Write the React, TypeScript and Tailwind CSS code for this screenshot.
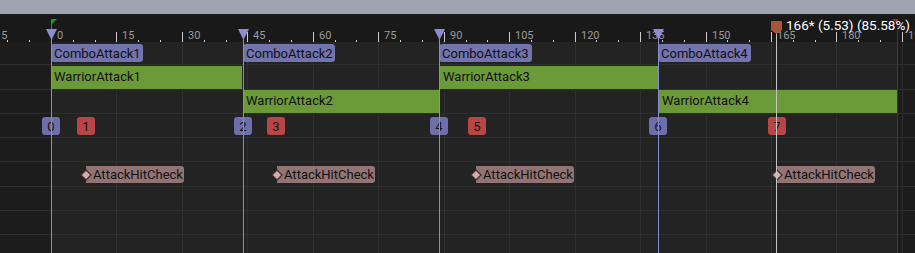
import React from 'react';

const PX = 65.45 / 15;
const fx = (f: number) => Math.round(51 + f * PX);

const sections = [
  { x: 51, name: 'ComboAttack1', w: 92 },
  { x: 243, name: 'ComboAttack2', w: 92 },
  { x: 439, name: 'ComboAttack3', w: 93 },
  { x: 658, name: 'ComboAttack4', w: 93 },
];

const clips = [
  { x: 51, w: 191, row: 0, name: 'WarriorAttack1' },
  { x: 243, w: 196, row: 1, name: 'WarriorAttack2' },
  { x: 440, w: 218, row: 0, name: 'WarriorAttack3' },
  { x: 659, w: 239, row: 1, name: 'WarriorAttack4' },
];

const badges = [
  { x: 51, n: 0, red: false },
  { x: 86, n: 1, red: true },
  { x: 243, n: 2, red: false },
  { x: 276, n: 3, red: true },
  { x: 439, n: 4, red: false },
  { x: 477, n: 5, red: true },
  { x: 658, n: 6, red: false },
  { x: 777, n: 7, red: true },
];

const notifies = [86, 277, 476, 777];

function Ruler() {
  const majors: number[] = [];
  for (let f = -15; f <= 195; f += 15) majors.push(f);
  const minors: number[] = [];
  for (let f = -15; f <= 200; f += 5) if (f % 15 !== 0) minors.push(f);

  return (
    <div className="relative h-[28px] bg-[#191919] overflow-hidden">
      {majors.map((f) => (
        <React.Fragment key={f}>
          <div className="absolute top-[18px] h-[10px] w-px bg-[#cdcdcd]" style={{ left: fx(f) }} />
          <span
            className="absolute top-[16px] text-[11px] leading-none text-[#9a9a9a]"
            style={{ left: fx(f) + 6 }}
          >
            {f}
          </span>
        </React.Fragment>
      ))}
      {minors.map((f) => (
        <div key={f} className="absolute top-[26px] h-[2px] w-px bg-[#cdcdcd]" style={{ left: fx(f) }} />
      ))}
    </div>
  );
}

function Row({ h, children }: { h: string; children?: React.ReactNode }) {
  return <div className={`relative shrink-0 border-b border-[#2e2e2e] ${h}`}>{children}</div>;
}

export default function App() {
  const majors: number[] = [];
  for (let f = 15; f <= 195; f += 15) majors.push(f);

  return (
    <div className="relative w-[915px] h-[253px] overflow-hidden flex flex-col bg-[#191919] font-['Roboto','Liberation_Sans',sans-serif]">
      <div className="h-[14px] shrink-0 bg-[#a0a4b2]" />
      <Ruler />

      <div className="relative flex-1 flex flex-col bg-[linear-gradient(to_right,#1c1c1c_51px,#232323_51px,#232323_898px,#1c1c1c_898px)]">
        {majors.map((f) => (
          <div key={f} className="absolute top-0 bottom-0 w-px bg-[#2f2f2f]" style={{ left: fx(f) }} />
        ))}

        <Row h="h-[23px]">
          {sections.map((s) => (
            <div
              key={s.name}
              className="absolute top-[2px] h-[18px] rounded-[3px] bg-[#7373ae] pl-[3px] pt-[3px] text-[13px] leading-none text-[#111]"
              style={{ left: s.x, width: s.w }}
            >
              {s.name}
            </div>
          ))}
        </Row>
        <Row h="h-[25px]">
          {clips
            .filter((c) => c.row === 0)
            .map((c) => (
              <div
                key={c.name}
                className="absolute top-[1px] h-[23px] bg-[#6b9a39] pl-[3px] pt-[4px] text-[13px] leading-none text-[#111]"
                style={{ left: c.x, width: c.w }}
              >
                {c.name}
              </div>
            ))}
        </Row>
        <Row h="h-[24px]">
          {clips
            .filter((c) => c.row === 1)
            .map((c) => (
              <div
                key={c.name}
                className="absolute top-0 h-[23px] bg-[#6b9a39] pl-[3px] pt-[4px] text-[13px] leading-none text-[#111]"
                style={{ left: c.x, width: c.w }}
              >
                {c.name}
              </div>
            ))}
        </Row>
        <Row h="h-[24px]">
          {badges.map((b) => (
            <div
              key={b.n}
              className={`absolute top-[3px] h-[18px] w-[18px] -ml-[9px] flex items-center justify-center rounded-[3px] text-[13px] leading-none text-[#151515] ${
                b.red ? 'bg-[#b94545]' : 'bg-[#6e6eaa]'
              }`}
              style={{ left: b.x }}
            >
              {b.n}
            </div>
          ))}
        </Row>
        <Row h="h-[24px]" />
        <Row h="h-[25px]">
          {notifies.map((x) => (
            <div key={x} className="absolute top-[4px] h-[17px] flex items-center" style={{ left: x }}>
              <div className="h-full rounded-r-[3px] bg-[#937474] pl-[7px] pr-[1px] flex items-center text-[13px] leading-none text-[#111]">
                AttackHitCheck
              </div>
              <svg className="absolute -left-[6px] top-[3px]" width="12" height="12" viewBox="0 0 12 12">
                <polygon points="6,1 11,6 6,11 1,6" fill="#dcaaaa" stroke="#3a3030" strokeWidth="1.3" />
              </svg>
            </div>
          ))}
        </Row>
        <Row h="h-[24px]" />
        <Row h="h-[24px]" />
      </div>

      {/* start flag */}
      <svg className="absolute left-[51px] top-[19px]" width="7" height="12" viewBox="0 0 7 12">
        <rect x="0" y="0" width="1" height="12" fill="#1f9c1f" />
        <polygon points="0,0 6,0 0,6" fill="#1f9c1f" />
      </svg>

      {/* section markers */}
      {sections.map((s) => (
        <React.Fragment key={s.x}>
          <div className="absolute top-[38px] bottom-0 w-px bg-[#8a8ad6]" style={{ left: s.x }} />
          <svg className="absolute top-[29px]" style={{ left: s.x - 5 }} width="11" height="11" viewBox="0 0 11 11">
            <polygon points="0,0 11,0 5.5,11" fill="#8c8cd0" />
          </svg>
        </React.Fragment>
      ))}

      {/* end marker */}
      <div className="absolute left-[897px] top-[20px] bottom-0 w-px bg-[#7e1e1e]" />
      <svg className="absolute left-[892px] top-[19px]" width="6" height="6" viewBox="0 0 6 6">
        <polygon points="0,0 6,0 6,5" fill="#b42222" />
      </svg>

      {/* current frame */}
      <div className="absolute left-[776px] top-[33px] bottom-0 w-px bg-[#c4c4c4]" />
      <svg className="absolute left-[771px] top-[21px]" width="11" height="13" viewBox="0 0 11 13">
        <path d="M1 0 H10 Q11 0 11 1 V9 L5.5 13 L0 9 V1 Q0 0 1 0 Z" fill="#a9533a" />
      </svg>
      <span className="absolute left-[786px] top-[19px] text-[13.5px] leading-none text-white whitespace-nowrap">
        166* (5.53) (85.58%)
      </span>
    </div>
  );
}
